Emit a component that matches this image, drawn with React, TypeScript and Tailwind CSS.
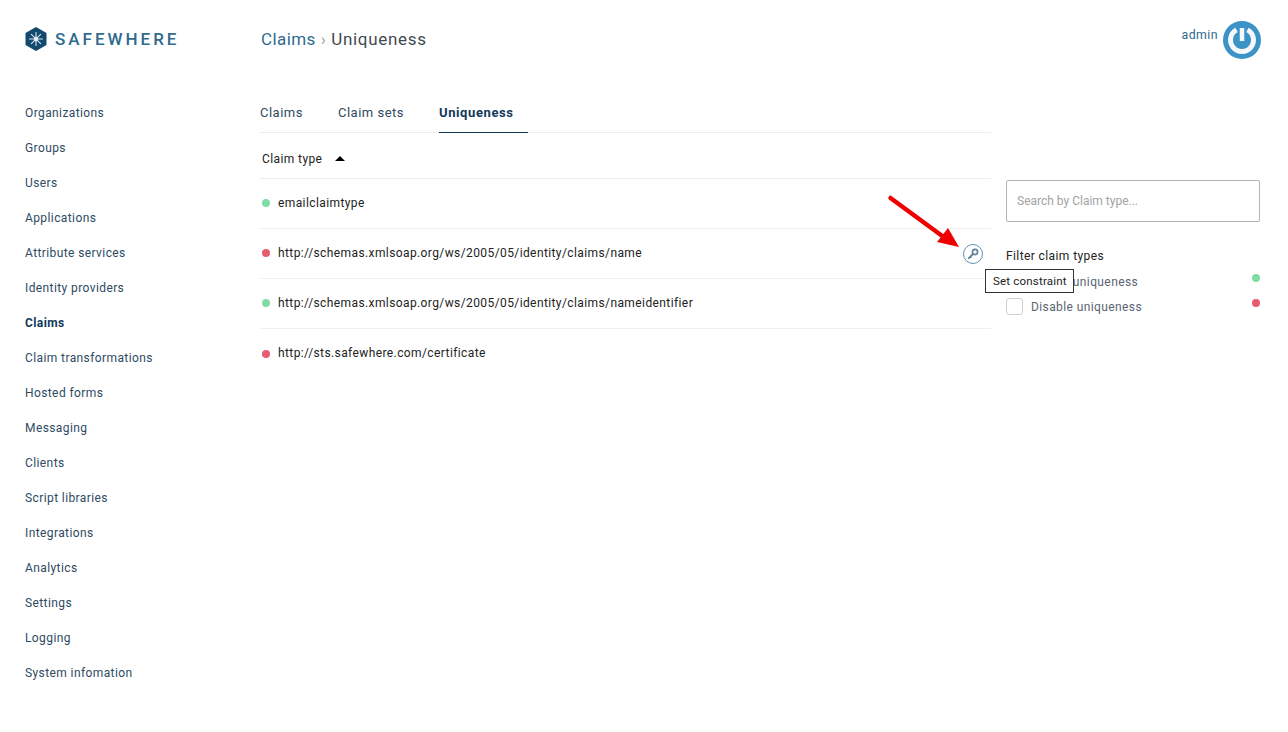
const navItems = [
  "Organizations",
  "Groups",
  "Users",
  "Applications",
  "Attribute services",
  "Identity providers",
  "Claims",
  "Claim transformations",
  "Hosted forms",
  "Messaging",
  "Clients",
  "Script libraries",
  "Integrations",
  "Analytics",
  "Settings",
  "Logging",
  "System infomation",
];

const rows = [
  { name: "emailclaimtype", on: true },
  { name: "http://schemas.xmlsoap.org/ws/2005/05/identity/claims/name", on: false, action: true },
  { name: "http://schemas.xmlsoap.org/ws/2005/05/identity/claims/nameidentifier", on: true },
  { name: "http://sts.safewhere.com/certificate", on: false },
];

const Logo = () => (
  <div className="flex items-center gap-[8px]">
    <svg width="22" height="24" viewBox="0 0 22 24">
      <path d="M11 0 L21.5 6 V18 L11 24 L0.5 18 V6 Z" fill="#12496f" />
      <g stroke="#d5e4ee" strokeWidth="1.1" strokeLinecap="round">
        <path d="M11 5.5 V18.5" />
        <path d="M4.5 12 H17.5" />
        <path d="M6.4 7.4 L15.6 16.6" />
        <path d="M6.4 16.6 L15.6 7.4" />
      </g>
      <circle cx="11" cy="12" r="2.2" fill="#e6eff5" />
    </svg>
    <span className="text-[17px] leading-none font-medium tracking-[3px] text-[#2f6a8f]">SAFEWHERE</span>
  </div>
);

const Dot = ({ on }: { on: boolean }) => (
  <span className={`block w-[8px] h-[8px] rounded-full ${on ? "bg-[#7fdca4]" : "bg-[#e65c70]"}`} />
);

const KeyIcon = () => (
  <svg width="12" height="12" viewBox="0 0 12 12" fill="none">
    <circle cx="8" cy="4" r="2.6" stroke="#5f8199" strokeWidth="1.6" />
    <path d="M6 6 L1.8 10.2" stroke="#5f8199" strokeWidth="1.8" strokeLinecap="round" />
    <path d="M3.2 8.8 L4.4 10" stroke="#5f8199" strokeWidth="1.2" />
  </svg>
);

const PowerAvatar = () => (
  <svg width="38" height="38" viewBox="0 0 38 38" fill="none">
    <circle cx="19" cy="19" r="19" fill="#3b93c8" />
    <path d="M13.5 8.9 A11.5 11.5 0 1 0 24.5 8.9" stroke="#f4f8fb" strokeWidth="5" />
    <path d="M19 7 V20" stroke="#f4f8fb" strokeWidth="4.5" />
  </svg>
);

export default function App() {
  return (
    <div className="relative flex h-[732px] w-full bg-white font-['Roboto',sans-serif] text-[12px] tracking-[0.4px] overflow-hidden">
      <aside className="w-[260px] shrink-0 pl-[25px] pt-[27px]">
        <Logo />
        <nav className="mt-[45px] flex flex-col">
          {navItems.map((item) => (
            <a
              key={item}
              className={`h-[35px] leading-[35px] ${item === "Claims" ? "font-bold text-[#12395b]" : "text-[#2e4a62]"}`}
            >
              {item}
            </a>
          ))}
        </nav>
      </aside>

      <main className="flex-1 min-w-0">
        <header className="flex h-[78px] items-start justify-between pr-[27px]">
          <div className="pt-[29px] pl-px text-[17px] leading-[20px] flex items-center">
            <span className="text-[#2f6a8f]">Claims</span>
            <span className="ml-[5px] mr-[5px] text-[17px] leading-[20px] text-[#a0a0a0]">›</span>
            <span className="tracking-[0.7px] text-[#3f4a52]">Uniqueness</span>
          </div>
          <div className="flex items-start gap-[5px] pt-[21px]">
            <span className="pt-[6px] text-[#2f6a8f] text-[12.3px] tracking-[0.45px] leading-[16px]">admin</span>
            <PowerAvatar />
          </div>
        </header>

        <div className="flex">
          <section className="w-[731px]">
            <div className="flex h-[55px] gap-[35px] border-b border-[#ececec] text-[13px] tracking-[0.5px]">
              <a className="pt-[17px] leading-[35px] text-[#2e4a62]">Claims</a>
              <a className="pt-[17px] leading-[35px] text-[#2e4a62]">Claim sets</a>
              <a className="h-[55px] pt-[17px] pr-[14px] leading-[35px] font-bold tracking-[0.6px] text-[#12395b] border-b border-[#12395b]">
                Uniqueness
              </a>
            </div>
            <div className="flex h-[46px] items-center gap-[13px] border-b border-[#ececec] pl-[2px] pt-[6px] text-[#222]">
              <span>Claim type</span>
              <span className="border-x-[5px] border-b-[5px] border-x-transparent border-b-black" />
            </div>
            {rows.map((row) => (
              <div key={row.name} className="flex h-[50px] items-center border-b border-[#f0f0f0] last:border-b-0 pl-[2px] pr-[8px] text-[#222]">
                <span className="-mt-[1px]"><Dot on={row.on} /></span>
                <span className="ml-[8px] flex-1 -mt-[2px]">{row.name}</span>
                {row.action && (
                  <span className="flex h-[20px] w-[20px] items-center justify-center rounded-full border-[1.5px] border-[#5f93b0]">
                    <KeyIcon />
                  </span>
                )}
              </div>
            ))}
          </section>

          <section className="ml-[15px] w-[254px] pt-[102px]">
            <input
              placeholder="Search by Claim type..."
              className="h-[42px] w-full rounded-[2px] border border-[#b3b3b3] px-[10px] text-[12px] tracking-normal placeholder:text-[#a3a3a3] outline-none"
            />
            <p className="mt-[26px] leading-[16px] text-[#222]">Filter claim types</p>
            <label className="mt-[5px] flex h-[25px] items-center text-[#5a6572]">
              <span className="h-[17px] w-[17px] rounded-[3px] border border-[#d0d0d0]" />
              <span className="ml-[8px] flex-1">Enable uniqueness</span>
              <span className="-mt-[8px]"><Dot on /></span>
            </label>
            <label className="flex h-[25px] items-center text-[#5a6572]">
              <span className="h-[17px] w-[17px] rounded-[3px] border border-[#d0d0d0]" />
              <span className="ml-[8px] flex-1">Disable uniqueness</span>
              <span className="-mt-[8px]"><Dot on={false} /></span>
            </label>
          </section>
        </div>
      </main>

      <div className="absolute left-[985px] top-[269px] h-[24px] w-[89px] border border-[#333] bg-white pl-[7px] text-[11.5px] tracking-[0.2px] leading-[22px] text-[#222] whitespace-nowrap">
        Set constraint
      </div>

      <svg className="absolute left-[885px] top-[192px]" width="80" height="60" viewBox="0 0 80 60">
        <path d="M5.5 6 L60 46" stroke="#f00000" strokeWidth="4.5" strokeLinecap="round" />
        <path d="M74 55 L52 50 L63 36 Z" fill="#f00000" />
      </svg>
    </div>
  );
}
